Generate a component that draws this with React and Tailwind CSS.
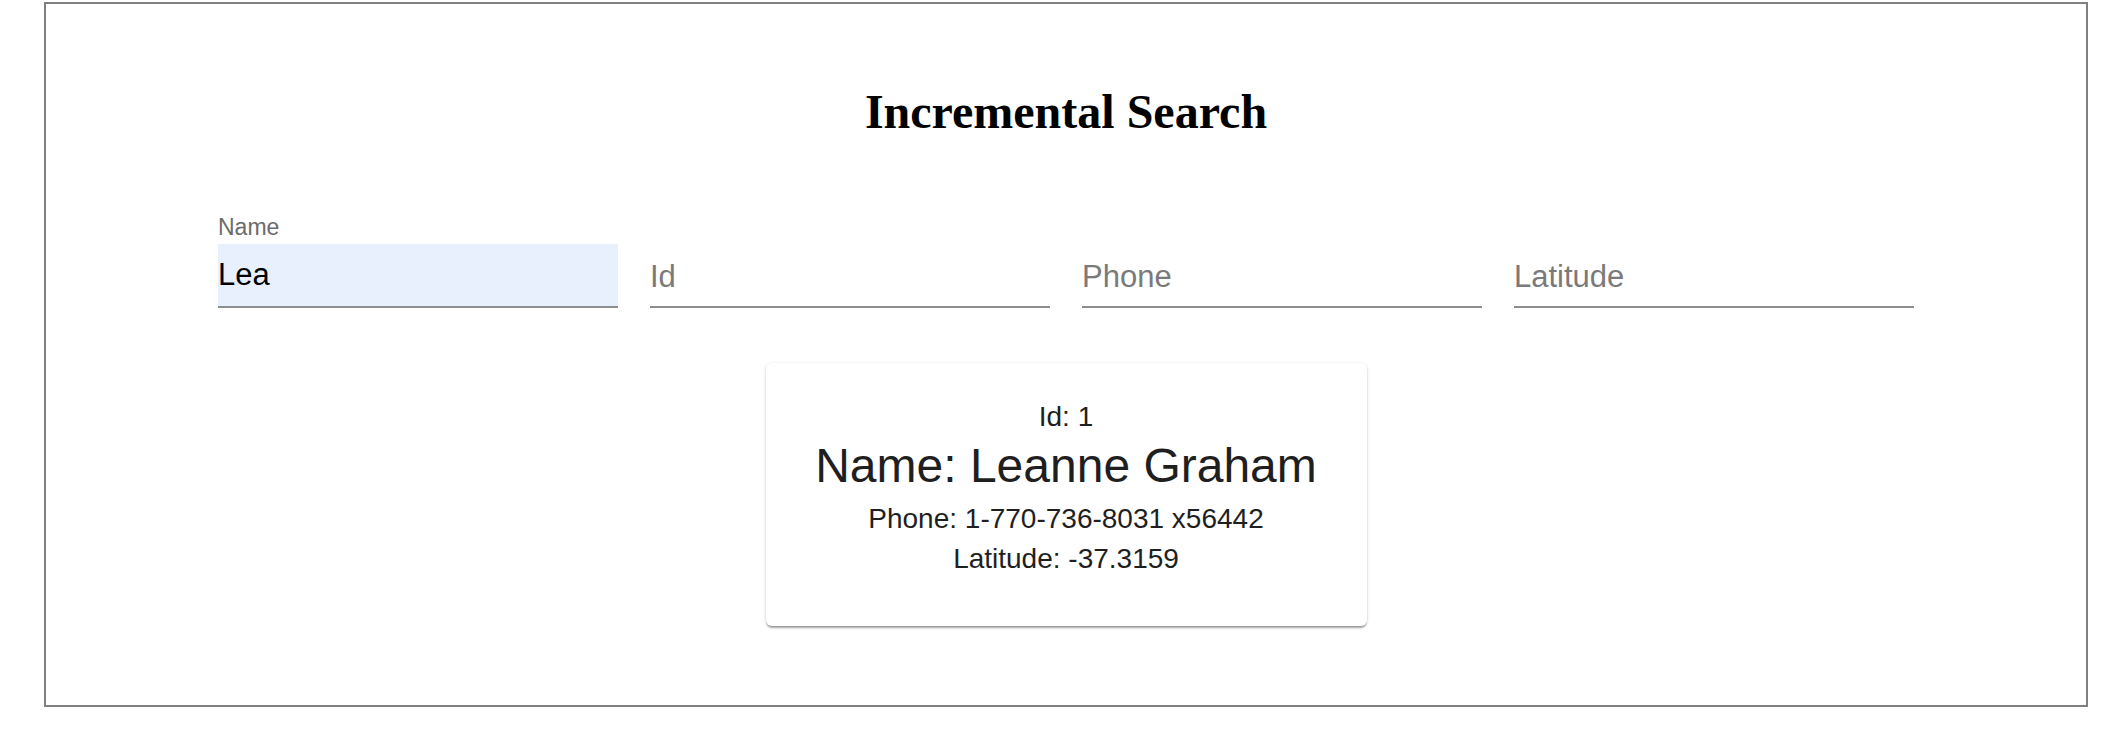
import React from "react";

const sans = { fontFamily: '"Liberation Sans", Arial, sans-serif' };

function Field({ label, value, placeholder, filled }) {
  return (
    <div className="flex w-[400px] flex-col">
      <div
        className="h-[28px] text-[23px] leading-[28px] text-[#6b6b6b]"
        style={sans}
      >
        {label || "\u00a0"}
      </div>
      <div className="mt-[3px]">
        <input
          readOnly
          value={value || ""}
          placeholder={placeholder}
          className={
            "block h-[64px] w-full border-b-2 border-[#8e8e8e] text-[31px] outline-none placeholder:text-[#7a7a7a] " +
            (filled ? "bg-[#e8f0fe] pt-[1px] pb-[1px] text-black" : "bg-white pt-[4px] pb-[0px] text-black")
          }
          style={sans}
        />
      </div>
    </div>
  );
}

export default function App() {
  return (
    <div className="w-[2108px] h-[746px] bg-white pt-[2px] pl-[44px]">
      <div className="box-border h-[705px] w-[2044px] border-2 border-[#808080] bg-white">
        <h1
          className="mt-[84px] text-center text-[48px] font-bold leading-[48px] text-black"
          style={{ fontFamily: '"Liberation Serif", "Times New Roman", serif' }}
        >
          Incremental Search
        </h1>
        <div className="mt-[77px] flex justify-center gap-[32px]">
          <Field label="Name" value="Lea" filled />
          <Field placeholder="Id" />
          <Field placeholder="Phone" />
          <Field placeholder="Latitude" />
        </div>
        <div
          className="mx-auto mt-[55px] w-[601px] rounded-[6px] bg-white pt-[34px] pb-[47px] text-center text-[#1f1f1f] shadow-[0_3px_2px_-1px_rgba(0,0,0,0.28),0_1px_2px_0_rgba(0,0,0,0.14),0_1px_4px_0_rgba(0,0,0,0.10)]"
          style={sans}
        >
          <div className="text-[28px] leading-[40px]">Id: 1</div>
          <div className="mt-[1px] text-[48px] leading-[56px]">Name: Leanne Graham</div>
          <div className="mt-[5px] text-[28px] leading-[40px]">Phone: 1-770-736-8031 x56442</div>
          <div className="text-[28px] leading-[40px]">Latitude: -37.3159</div>
        </div>
      </div>
    </div>
  );
}
